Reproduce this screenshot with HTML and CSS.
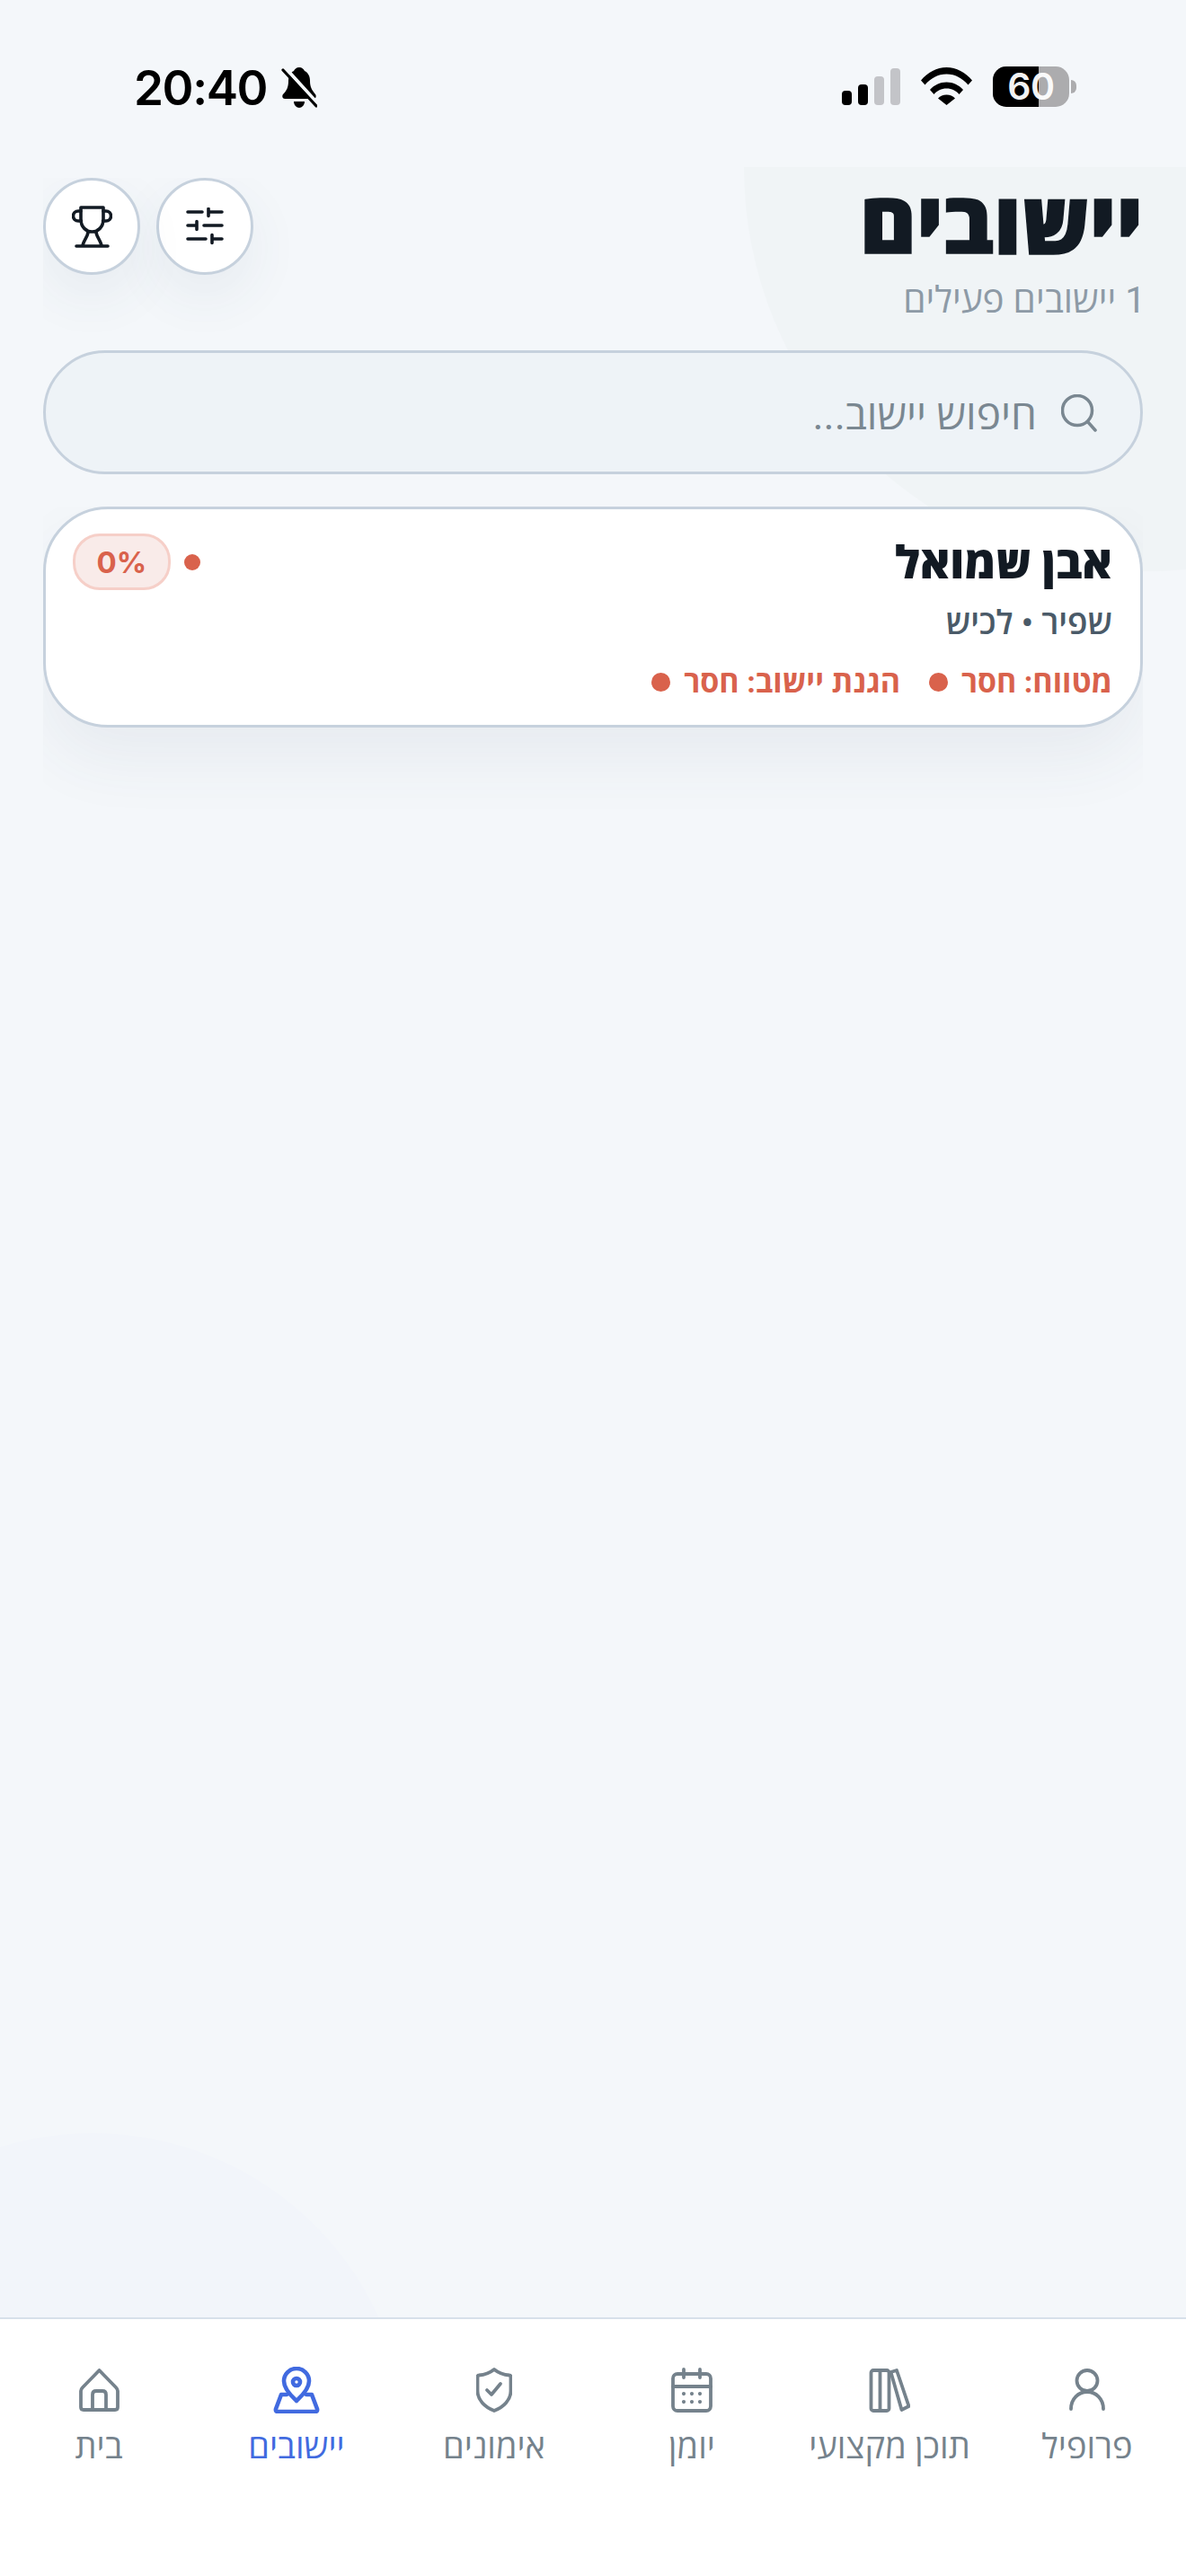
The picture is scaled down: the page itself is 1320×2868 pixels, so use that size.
FILE: index.html
```html
<!DOCTYPE html>
<html lang="he" dir="rtl">
<head>
<meta charset="utf-8">
<title>יישובים</title>
<link rel="stylesheet" href="styles.css">
</head>
<body>
<div class="screen">
  <div class="blob blob-top"></div>
  <div class="blob blob-bottom"></div>

  <div class="status" dir="ltr">
    <div class="status-left">
      <span class="time">20:40</span>
      <svg class="bell" viewBox="0 0 40 45" width="40" height="45">
        <path d="M20 0c3 0 5 2 6 4 4 2 6 6 6 11 0 7 2 10 6 15 1.500 2 .5 5-2 5H4c-2.500 0-3.500-3-2-5 4-4 6-8 6-15 0-5 2-9 6-11 1-2 3-4 6-4z" fill="#000"/>
        <path d="M14 38h12c0 4-3 7-6 7s-6-3-6-7z" fill="#000"/>
        <path d="M4 0 42 42" stroke="#f4f7fa" stroke-width="4" fill="none"/>
        <path d="M2 3 39 43" stroke="#000" stroke-width="3.200" stroke-linecap="round" fill="none"/>
      </svg>
    </div>
    <div class="status-right">
      <div class="signal"><i class="b1"></i><i class="b2"></i><i class="b3"></i><i class="b4"></i></div>
      <svg class="wifi" viewBox="0 0 57 42" width="57" height="42">
        <path d="M0 14.500C7.500 5.500 17.500 0 28.500 0S49.500 5.500 57 14.500l-4.500 5C46 12 38 7.500 28.500 7.500S11 12 4.500 19.500z" fill="#000"/>
        <path d="M10 25c5-5.500 11-8.500 18.500-8.500S42 19.500 47 25l-4.500 5c-3.500-4-8-6.500-14-6.500s-10.500 2.500-14 6.500z" fill="#000"/>
        <path d="M19 34.500c2.500-2.500 5.500-4 9.500-4s7 1.500 9.500 4L28.500 42z" fill="#000"/>
      </svg>
      <div class="battery"><span class="batt-fill"></span><span class="batt-num">60</span></div>
      <span class="batt-cap"></span>
    </div>
  </div>

  <header class="page-head">
    <div class="titles">
      <h1 class="title">יישובים</h1>
      <p class="subtitle">1 יישובים פעילים</p>
    </div>
    <div class="head-actions">
      <button class="round-btn" aria-label="סינון">
        <svg viewBox="0 0 42 42" width="42" height="42" fill="none" stroke="#121a23" stroke-width="3.600" stroke-linecap="round">
          <path d="M2 5H18M25 5H40M25 1.500V9.500M2 20H12M12 15.500V24.500M20 20H40M2 35H22M29 35H40M29 30.500V39.500"/>
        </svg>
      </button>
      <button class="round-btn" aria-label="גביע">
        <svg viewBox="0 0 45 47" width="45" height="47" fill="none" stroke="#121a23" stroke-width="3.600" stroke-linecap="round" stroke-linejoin="round">
          <path d="M10 2h25v13c0 9-6 14-12.500 14S10 24 10 15z"/>
          <path d="M10 6H7a5.500 5.500 0 0 0 0 11h3.500M35 6h3a5.500 5.500 0 0 1 0 11h-3.500"/>
          <path d="M18 29c0 5-4 8-6 15M27 29c0 5 4 8 6 15M5 45h35"/>
        </svg>
      </button>
    </div>
  </header>

  <div class="search">
    <svg class="search-icon" viewBox="0 0 40 42" width="40" height="42" fill="none" stroke="#7a8791" stroke-width="3.500" stroke-linecap="round">
      <circle cx="18" cy="18" r="16.500"/>
      <path d="M30 31l8 9"/>
    </svg>
    <span class="placeholder">חיפוש יישוב...</span>
  </div>

  <div class="card-clip">
    <article class="card">
      <div class="card-top">
        <h2 class="card-name">אבן שמואל</h2>
        <div class="card-status">
          <span class="mini-dot"></span>
          <span class="badge" dir="ltr">0%</span>
        </div>
      </div>
      <p class="card-sub">שפיר • לכיש</p>
      <div class="card-flags">
        <span class="flag"><span class="flag-text">מטווח: חסר</span><span class="flag-dot"></span></span>
        <span class="flag"><span class="flag-text">הגנת יישוב: חסר</span><span class="flag-dot"></span></span>
      </div>
    </article>
  </div>

  <nav class="tabbar">
    <div class="tab">
      <div class="tab-icon">
        <svg viewBox="0 0 40 48" width="40" height="48" fill="none" stroke="#75828c" stroke-width="3.800" stroke-linecap="round" stroke-linejoin="round">
          <circle cx="20" cy="13.500" r="11.500"/>
          <path d="M2 45c0-11 8-19 18-19s18 8 18 19"/>
        </svg>
      </div>
      <span class="tab-label">פרופיל</span>
    </div>
    <div class="tab">
      <div class="tab-icon">
        <svg viewBox="0 0 46 50" width="46" height="50" fill="none" stroke="#75828c" stroke-width="3.800" stroke-linecap="round" stroke-linejoin="round">
          <rect x="2.500" y="3" width="20" height="45" rx="2.500"/>
          <path d="M12.500 3v45"/>
          <path d="m24.500 5 6.500-2 13.500 40-8 4z"/>
        </svg>
      </div>
      <span class="tab-label">תוכן מקצועי</span>
    </div>
    <div class="tab">
      <div class="tab-icon">
        <svg viewBox="0 0 46 50" width="46" height="50" fill="none" stroke="#75828c" stroke-width="3.800" stroke-linecap="round" stroke-linejoin="round">
          <rect x="2" y="7" width="42" height="41" rx="5"/>
          <path d="M2 21H44M14 2V11M32 2V11"/>
          <path d="M14 29v.1M23 29v.1M32 29v.1M14 38v.1M23 38v.1M32 38v.1" stroke-width="4.200"/>
        </svg>
      </div>
      <span class="tab-label">יומן</span>
    </div>
    <div class="tab">
      <div class="tab-icon">
        <svg viewBox="0 0 40 50" width="40" height="50" fill="none" stroke="#75828c" stroke-width="3.800" stroke-linecap="round" stroke-linejoin="round">
          <path d="M20 2c5 4 10 6 17 6.500 1 0 1.500.8 1.500 2V26c0 10-8 18-18.500 22C9.500 44 1.500 36 1.500 26V10.500c0-1.200.5-2 1.500-2C10 8 15 6 20 2z"/>
          <path d="m12 25 5 5 10-12"/>
        </svg>
      </div>
      <span class="tab-label">אימונים</span>
    </div>
    <div class="tab active">
      <div class="tab-icon">
        <svg viewBox="0 0 52 52" width="52" height="52" fill="none" stroke="#416ae0" stroke-width="4.600" stroke-linecap="round" stroke-linejoin="round">
          <path d="M26 38c-3-3-14-12-14-22a14 14 0 0 1 28 0c0 10-11 19-14 22z"/>
          <circle cx="26" cy="17" r="4"/>
          <path d="M15 31H9L3 47c-.5 2 .5 3 2 3h42c1.500 0 2.500-1 2-3l-6-16h-6"/>
        </svg>
      </div>
      <span class="tab-label">יישובים</span>
    </div>
    <div class="tab">
      <div class="tab-icon">
        <svg viewBox="0 0 45 48" width="45" height="48" fill="none" stroke="#75828c" stroke-width="3.800" stroke-linecap="round" stroke-linejoin="round">
          <path d="M22.500 2 4 21c-1.500 1.500-2 2.500-2 4v18c0 2 1 3 3 3h35c2 0 3-1 3-3V25c0-1.500-.5-2.500-2-4z"/>
          <path d="M15 46V29c0-2.500 1.500-4 4-4h7c2.500 0 4 1.500 4 4v17"/>
        </svg>
      </div>
      <span class="tab-label">בית</span>
    </div>
  </nav>
</div>
</body>
</html>
```

FILE: styles.css
```css
* { box-sizing: border-box; }
html, body { margin: 0; padding: 0; }
body {
  width: 1320px;
  height: 2868px;
  overflow: hidden;
  background: #f4f7fa;
  font-family: Roboto, "Open Sans", "Liberation Sans", sans-serif;
  color: #121a23;
}
.screen {
  position: relative;
  width: 1320px;
  height: 2868px;
  display: flex;
  flex-direction: column;
  overflow: hidden;
  background: #f4f7fa;
}
.blob { position: absolute; border-radius: 50%; pointer-events: none; }
.blob-top {
  left: 828px; top: -264px;
  width: 900px; height: 900px;
  background: #f0f4f6;
  clip-path: inset(450px 0 0 0);
}
.blob-bottom {
  left: -247px; top: 2375px;
  width: 700px; height: 700px;
  background: #f2f5fa;
}

.status {
  position: relative;
  height: 198px;
  flex: none;
  display: flex;
  justify-content: space-between;
  padding: 74px 122px 0 149px;
}
.status-left { display: flex; align-items: flex-start; gap: 16px; }
.time {
  font-family: "Inter", "Liberation Sans", sans-serif;
  font-weight: 600;
  font-size: 53px;
  line-height: 50px;
  letter-spacing: -1.400px;
  color: #000;
  margin-top: -1px;
}
.bell { margin-top: 1px; }
.status-right { display: flex; align-items: flex-start; }
.signal { display: flex; align-items: flex-end; gap: 7px; height: 41px; margin-top: 2px; margin-right: 23px; }
.signal i { display: block; width: 11px; border-radius: 4px; background: #000; }
.signal .b1 { height: 16px; }
.signal .b2 { height: 23px; }
.signal .b3 { height: 32px; background: #c3c4c8; }
.signal .b4 { height: 41px; background: #c3c4c8; }
.wifi { margin-top: 1px; margin-right: 23px; }
.battery {
  position: relative;
  width: 85px; height: 45px;
  border-radius: 15px;
  background: #acacae;
  display: flex; align-items: center; justify-content: center;
}
.batt-fill {
  position: absolute; left: 0; top: 0; bottom: 0;
  width: 51px;
  background: #000;
  border-radius: 15px 0 0 15px;
}
.batt-num {
  position: relative;
  font-family: "Inter", "Liberation Sans", sans-serif;
  font-weight: 600;
  font-size: 41px;
  line-height: 45px;
  letter-spacing: -.5px;
  color: #fff;
  opacity: .95;
}
.batt-cap {
  width: 6px; height: 15px;
  margin: 15px 0 0 2px;
  background: #acacae;
  border-radius: 0 6px 6px 0;
}

.page-head {
  position: relative;
  flex: none;
  display: flex;
  justify-content: space-between;
  align-items: flex-start;
  padding: 0 45px 0 48px;
  height: 192px;
}
.title {
  margin: -4px 3px 4px 0;
  font-size: 96px;
  font-weight: 900;
  line-height: 112px;
  color: #121a23;
  -webkit-text-stroke: 1.500px #121a23;
}
.subtitle {
  margin: 0;
  font-size: 40.500px;
  line-height: 48px;
  color: #8d9aa6;
}
.head-actions { display: flex; gap: 18px; clip-path: inset(0 -90px -70px 0); }
.round-btn {
  width: 108px; height: 108px;
  border-radius: 50%;
  border: 3px solid #c6d1dd;
  background: #fff;
  padding: 0;
  display: flex; align-items: center; justify-content: center;
  box-shadow: 0 24px 60px rgba(60, 80, 110, .07);
}

.search {
  position: relative;
  flex: none;
  display: flex;
  align-items: center;
  gap: 27px;
  margin: 0 48px;
  height: 138px;
  padding: 0 48px 0 0;
  border: 3px solid #c6d1dd;
  border-radius: 69px;
  background: #eef3f7;
}
.search-icon { margin-top: 2px; }
.placeholder { font-size: 46px; color: #7a8791; line-height: 60px; padding-top: 6px; }

.card-clip {
  position: relative;
  flex: none;
  margin: 36px 48px 0;
  clip-path: inset(0 0 -110px 0);
}
.card {
  height: 246px;
  padding: 27px 31px 0 30px;
  background: #fff;
  border: 3px solid #c6d1dd;
  border-radius: 72px;
  box-shadow: 0 36px 72px rgba(60, 80, 110, .065);
}
.card-top { display: flex; justify-content: space-between; align-items: flex-start; }
.card-name { margin: 0; font-size: 50px; font-weight: 800; line-height: 66px; color: #121a23; }
.card-status { display: flex; align-items: center; gap: 15px; height: 63px; }
.mini-dot { width: 18px; height: 18px; border-radius: 50%; background: #d9624c; }
.badge {
  display: flex; align-items: center; justify-content: center;
  width: 109px; height: 63px;
  border: 3px solid #f6cfc8;
  border-radius: 30px;
  background: #f9ebe9;
  color: #d9624c;
  font-family: "Inter", "Liberation Sans", sans-serif;
  font-size: 33px;
  font-weight: 700;
}
.card-sub { margin: 10px 0 0; font-size: 37px; font-weight: 600; line-height: 48px; color: #4a5a68; }
.card-flags { display: flex; gap: 32px; margin-top: 20px; }
.flag { display: flex; align-items: center; gap: 15px; }
.flag-text { font-size: 34px; font-weight: 700; line-height: 42px; color: #d9624c; }
.flag-dot { width: 21px; height: 21px; border-radius: 50%; background: #d9624c; }

.tabbar {
  position: absolute;
  left: 0; right: 0; bottom: 0;
  height: 288px;
  display: grid;
  grid-template-columns: repeat(6, 1fr);
  align-items: start;
  padding-top: 52px;
  background: #fff;
  border-top: 2px solid #d7e0ea;
}
.tab { display: flex; flex-direction: column; align-items: center; gap: 12px; }
.tab-icon { height: 54px; display: flex; align-items: center; justify-content: center; }
.tab-label { font-size: 38px; line-height: 48px; font-weight: 500; color: #75828c; white-space: nowrap; }
.tab.active .tab-label { color: #416ae0; }
```
